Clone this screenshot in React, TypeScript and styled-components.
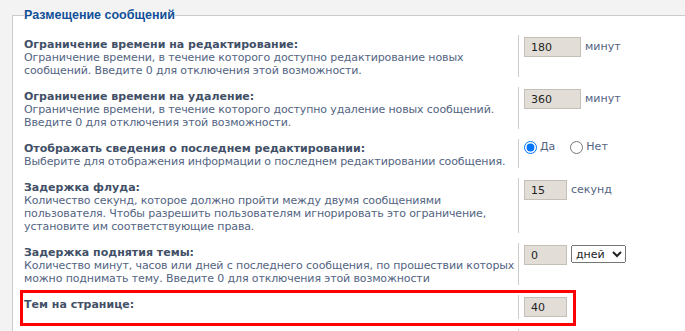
import React from 'react'
import styled, { createGlobalStyle } from 'styled-components'

const GlobalStyle = createGlobalStyle`
  html, body {
    margin: 0;
    padding: 0;
    overflow: hidden;
    background: #f3f3f3;
  }
  body {
    font-family: "DejaVu Sans", Verdana, sans-serif;
    font-size: 11px;
  }
`

const Page = styled.div`
  width: 800px;
  padding: 7px 0 0 12px;
`

const Fieldset = styled.fieldset`
  margin: 0;
  padding: 0 0 0 11px;
  border: 1px solid #cccccc;
  background: #ffffff;
`

const Legend = styled.legend`
  padding: 0;
  font-family: "Liberation Sans", Arial, sans-serif;
  font-size: 12.5px;
  font-weight: bold;
  color: #115098;
  line-height: 16px;
`

const Rows = styled.div`
  padding-top: 12px;
  display: flex;
  flex-direction: column;
  gap: 10px;
`

const Row = styled.div`
  position: relative;
  display: flex;
  align-items: stretch;
`

const Term = styled.div`
  width: 494px;
  flex: none;
  padding-top: 3px;
  line-height: 13px;
  white-space: nowrap;
`

const Title = styled.div`
  font-weight: bold;
  color: #425067;
`

const Explain = styled.div`
  color: #536482;
  letter-spacing: -0.12px;
`

const Value = styled.div`
  border-left: 1px solid #cccccc;
  padding-left: 5px;
  display: flex;
  align-items: flex-start;
  gap: 4px;
`

const NumberBox = styled.input<{ $wide?: boolean }>`
  box-sizing: border-box;
  width: ${p => (p.$wide ? 57 : 43)}px;
  height: 20px;
  margin: 2px 0;
  padding: 0 6px;
  border: 1px solid #c4c0b8;
  background: #e2ded7;
  color: #222;
  font-family: "DejaVu Sans", Verdana, sans-serif;
  font-size: 11px;
`

const Unit = styled.span`
  color: #536482;
  line-height: 13px;
  margin-top: 5px;
`

const RadioLabel = styled.label`
  display: flex;
  align-items: center;
  color: #536482;
  margin-right: 11px;
  line-height: 14px;
  margin-top: 1px;

  input {
    margin: 0 3px 0 0;
    width: 13px;
    height: 13px;
  }
`

const UnitSelect = styled.select`
  width: 55px;
  height: 18px;
  margin-top: 2px;
  font-family: "DejaVu Sans", Verdana, sans-serif;
  font-size: 11px;
  color: #222;
`

const Highlight = styled.div`
  position: absolute;
  left: -4px;
  top: -5px;
  width: 556px;
  height: 36px;
  box-sizing: border-box;
  border: 3px solid #f00;
  pointer-events: none;
`

interface OptionProps {
  title: string
  explain?: string[]
  children: React.ReactNode
  marked?: boolean
}

const Option: React.FC<OptionProps> = ({ title, explain, children, marked }) => (
  <Row>
    <Term>
      <Title>{title}</Title>
      {explain && explain.map(line => <Explain key={line}>{line}</Explain>)}
    </Term>
    <Value>{children}</Value>
    {marked && <Highlight />}
  </Row>
)

export default function App() {
  return (
    <Page>
      <GlobalStyle />
      <Fieldset>
        <Legend>Размещение сообщений</Legend>
        <Rows>
          <Option
            title="Ограничение времени на редактирование:"
            explain={[
              'Ограничение времени, в течение которого доступно редактирование новых',
              'сообщений. Введите 0 для отключения этой возможности.',
            ]}
          >
            <NumberBox $wide defaultValue="180" />
            <Unit>минут</Unit>
          </Option>
          <Option
            title="Ограничение времени на удаление:"
            explain={[
              'Ограничение времени, в течение которого доступно удаление новых сообщений.',
              'Введите 0 для отключения этой возможности.',
            ]}
          >
            <NumberBox $wide defaultValue="360" />
            <Unit>минут</Unit>
          </Option>
          <Option
            title="Отображать сведения о последнем редактировании:"
            explain={['Выберите для отображения информации о последнем редактировании сообщения.']}
          >
            <RadioLabel>
              <input type="radio" name="edit_reason" defaultChecked />
              Да
            </RadioLabel>
            <RadioLabel>
              <input type="radio" name="edit_reason" />
              Нет
            </RadioLabel>
          </Option>
          <Option
            title="Задержка флуда:"
            explain={[
              'Количество секунд, которое должно пройти между двумя сообщениями',
              'пользователя. Чтобы разрешить пользователям игнорировать это ограничение,',
              'установите им соответствующие права.',
            ]}
          >
            <NumberBox defaultValue="15" />
            <Unit>секунд</Unit>
          </Option>
          <Option
            title="Задержка поднятия темы:"
            explain={[
              'Количество минут, часов или дней с последнего сообщения, по прошествии которых',
              'можно поднимать тему. Введите 0 для отключения этой возможности',
            ]}
          >
            <NumberBox defaultValue="0" />
            <UnitSelect defaultValue="d">
              <option value="m">минут</option>
              <option value="h">часов</option>
              <option value="d">дней</option>
            </UnitSelect>
          </Option>
          <Option title="Тем на странице:" marked>
            <NumberBox defaultValue="40" />
          </Option>
          <Option title="Сообщений на странице:">
            <NumberBox defaultValue="10" />
          </Option>
        </Rows>
      </Fieldset>
    </Page>
  )
}
